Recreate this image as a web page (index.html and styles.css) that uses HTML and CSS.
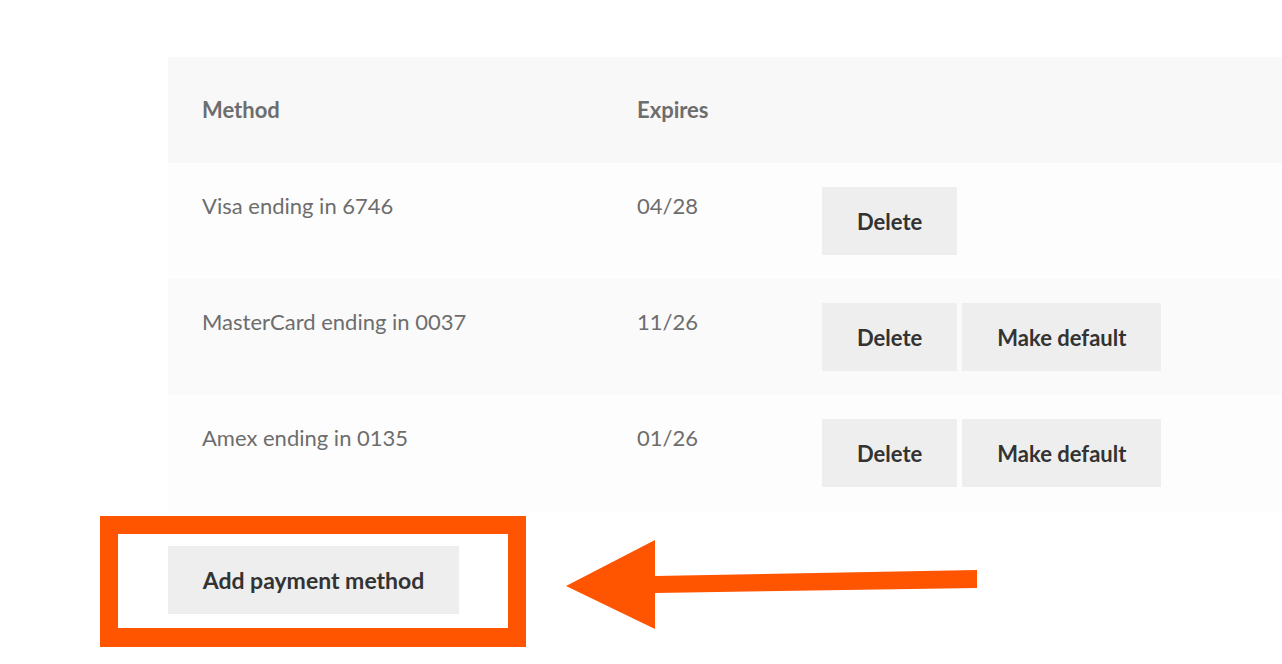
FILE: index.html
```html
<!DOCTYPE html>
<html lang="en">
<head>
<meta charset="utf-8">
<title>Payment methods</title>
<link rel="stylesheet" href="styles.css">
</head>
<body>
<main class="page">
  <table class="methods">
    <thead>
      <tr>
        <th class="col-method">Method</th>
        <th class="col-expires">Expires</th>
        <th class="col-actions"></th>
      </tr>
    </thead>
    <tbody>
      <tr class="row-light">
        <td class="cell-text">Visa ending in 6746</td>
        <td class="cell-text">04/28</td>
        <td class="cell-actions"><a class="button" href="#">Delete</a></td>
      </tr>
      <tr class="row-dark">
        <td class="cell-text">MasterCard ending in 0037</td>
        <td class="cell-text">11/26</td>
        <td class="cell-actions"><a class="button" href="#">Delete</a><a class="button" href="#">Make default</a></td>
      </tr>
      <tr class="row-light">
        <td class="cell-text">Amex ending in 0135</td>
        <td class="cell-text">01/26</td>
        <td class="cell-actions"><a class="button" href="#">Delete</a><a class="button" href="#">Make default</a></td>
      </tr>
    </tbody>
  </table>
  <div class="add-row">
    <a class="button add-button" href="#">Add payment method</a>
    <svg class="annotation" width="1282" height="664" viewBox="0 0 1282 664" aria-hidden="true">
      <path fill="#ff5400" fill-rule="evenodd" d="M100 516H526V647H100Z M118 534V628H508V534Z"/>
      <polygon fill="#ff5400" points="566,586 655,540 655,576 977,570 977,588 655,593 655,629"/>
    </svg>
  </div>
</main>
</body>
</html>
```

FILE: styles.css
```css
html, body {
  margin: 0;
  padding: 0;
  background: #ffffff;
}

body {
  font-family: "Source Sans Pro", Lato, "Liberation Sans", sans-serif;
  font-size: 22px;
  color: #6d6d6d;
}

.page {
  padding: 57px 0 0 168px;
}

.methods {
  width: 1114px;
  border-collapse: collapse;
  border-spacing: 0;
}

.methods th {
  background: #f8f8f8;
  height: 106px;
  padding: 0 34px 2px;
  text-align: left;
  font-weight: 700;
  color: #6d6d6d;
  vertical-align: middle;
  box-sizing: border-box;
}

.col-method { width: 435px; }
.col-expires { width: 185px; }

.row-light { background: #fdfdfd; }
.row-dark { background: #fafafa; }

.methods td {
  height: 116px;
  box-sizing: border-box;
  vertical-align: top;
  padding: 0 34px;
}

.cell-text {
  padding-top: 27px !important;
  line-height: 32px;
}

.cell-actions {
  padding-top: 24px !important;
  font-size: 0;
}

.button {
  display: inline-flex;
  align-items: center;
  justify-content: center;
  height: 68px;
  padding: 0 35px;
  background: #eeeeee;
  color: #333333;
  font-size: 22px;
  font-weight: 700;
  text-decoration: none;
  white-space: nowrap;
  box-sizing: border-box;
}

.cell-actions .button + .button {
  margin-left: 5px;
}

.add-row {
  padding-top: 35px;
}

.add-button {
  width: 291px;
  padding: 0;
  font-size: 23px;
}

.annotation {
  position: absolute;
  left: 0;
  top: 0;
  pointer-events: none;
}
```
